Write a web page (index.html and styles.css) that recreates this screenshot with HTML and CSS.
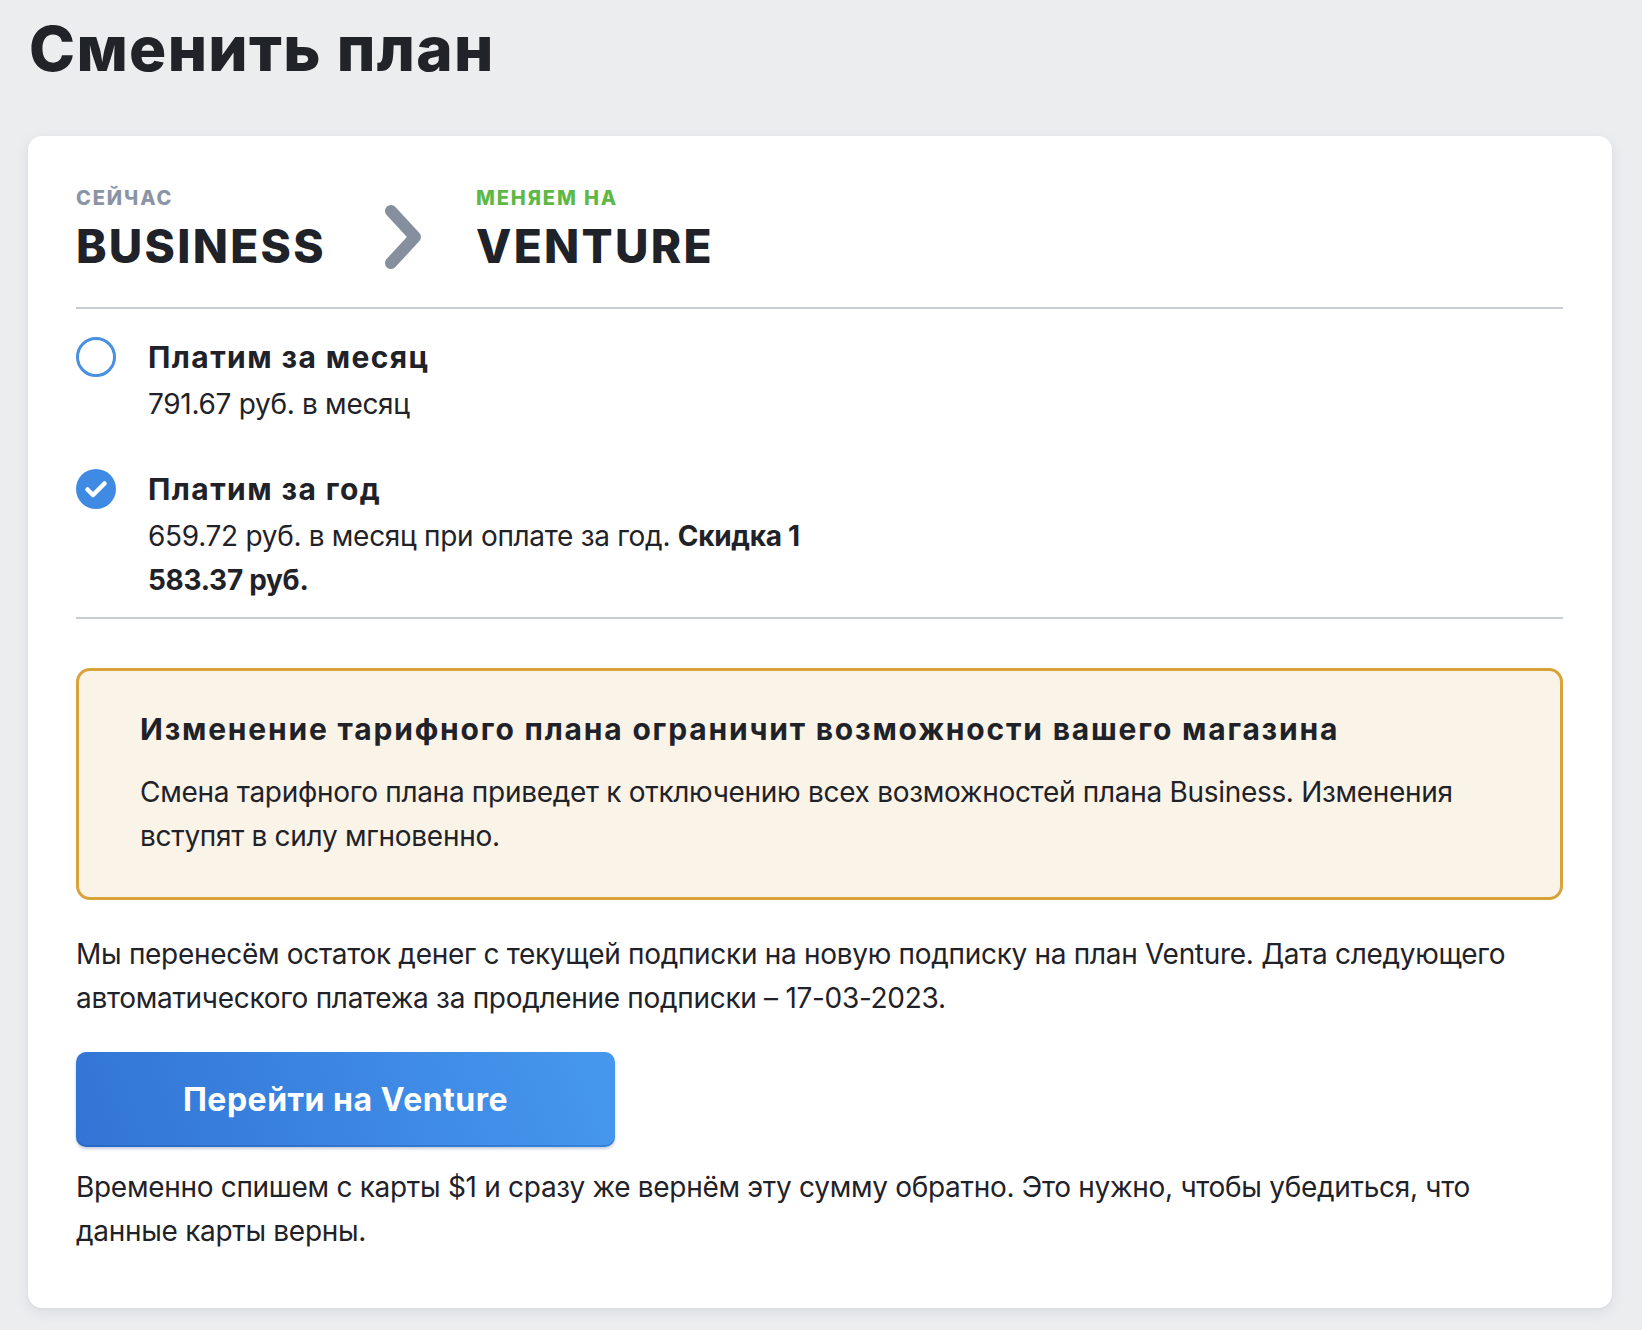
FILE: index.html
```html
<!DOCTYPE html>
<html lang="ru">
<head>
<meta charset="utf-8">
<title>Сменить план</title>
<link rel="stylesheet" href="styles.css">
</head>
<body>
<div class="page">
  <h1 class="page-title">Сменить план</h1>
  <div class="card">
    <div class="plans">
      <div class="plan">
        <div class="plan-label">Сейчас</div>
        <div class="plan-name">BUSINESS</div>
      </div>
      <svg class="chevron" width="36" height="64" viewBox="0 0 36 64"><polyline points="6,6 30,32 6,58" fill="none" stroke="#858f9d" stroke-width="12" stroke-linecap="round" stroke-linejoin="round"/></svg>
      <div class="plan">
        <div class="plan-label plan-label-new">Меняем на</div>
        <div class="plan-name">VENTURE</div>
      </div>
    </div>
    <div class="options">
      <div class="option">
        <span class="radio"></span>
        <div class="option-body">
          <div class="option-title">Платим за месяц</div>
          <div class="option-text">791.67 руб. в месяц</div>
        </div>
      </div>
      <div class="option">
        <span class="radio radio-checked"><svg width="40" height="40" viewBox="0 0 40 40"><polyline points="11.5,20.5 17,26 28.5,14.5" fill="none" stroke="#fff" stroke-width="4.5" stroke-linecap="round" stroke-linejoin="round"/></svg></span>
        <div class="option-body">
          <div class="option-title">Платим за год</div>
          <div class="option-text option-text-narrow">659.72 руб. в месяц при оплате за год. <b>Скидка 1 583.37 руб.</b></div>
        </div>
      </div>
    </div>
    <div class="warning">
      <div class="warning-title">Изменение тарифного плана ограничит возможности вашего магазина</div>
      <p class="warning-text">Смена тарифного плана приведет к отключению всех возможностей плана Business. Изменения вступят в силу мгновенно.</p>
    </div>
    <p class="note">Мы перенесём остаток денег с текущей подписки на новую подписку на план Venture. Дата следующего автоматического платежа за продление подписки – 17-03-2023.</p>
    <button class="btn">Перейти на Venture</button>
    <p class="hint">Временно спишем с карты $1 и сразу же вернём эту сумму обратно. Это нужно, чтобы убедиться, что данные карты верны.</p>
  </div>
</div>
</body>
</html>
```

FILE: styles.css
```css
* { box-sizing: border-box; }
html, body { margin: 0; padding: 0; }
body {
  background: #ecedef;
  font-family: Inter, "Noto Sans", sans-serif;
  color: #1f2228;
}
.page {
  padding: 12px 30px 23px 28px;
}
.page-title {
  margin: 0 0 50px 1px;
  font-size: 62px;
  line-height: 74px;
  font-weight: 800;
  letter-spacing: 1.3px;
  color: #202328;
}
.card {
  background: #fff;
  border-radius: 14px;
  box-shadow: 0 4px 14px rgba(30, 40, 60, 0.08), 0 1px 3px rgba(30, 40, 60, 0.05);
  padding: 50px 49px 55px 48px;
}
.plans {
  display: flex;
  align-items: flex-start;
  padding-bottom: 33px;
  border-bottom: 2px solid #c9cdd3;
}
.plan-label {
  font-size: 20px;
  line-height: 24px;
  font-weight: 800;
  letter-spacing: 1.9px;
  text-transform: uppercase;
  color: #8a94a5;
  margin-bottom: 8px;
}
.plan-label-new { color: #5cb946; }
.plan-name {
  font-size: 46px;
  line-height: 56px;
  font-weight: 800;
  letter-spacing: 2.3px;
  color: #1f2228;
}
.chevron {
  flex: none;
  margin: 19px 55px 0 59px;
}
.options {
  display: flex;
  flex-direction: column;
  gap: 43px;
  padding: 28px 0 15px;
  border-bottom: 2px solid #c9cdd3;
}
.option {
  display: flex;
  align-items: flex-start;
  gap: 32px;
}
.radio {
  flex: none;
  width: 40px;
  height: 40px;
  border-radius: 50%;
  border: 3.5px solid #4a90e2;
  background: #fff;
}
.radio-checked {
  border: none;
  background: #3f8ae3;
}
.radio-checked svg { display: block; }
.option-title {
  font-size: 30px;
  line-height: 40px;
  font-weight: 700;
  letter-spacing: 1.4px;
  color: #1f2228;
}
.option-text {
  margin-top: 5px;
  font-size: 28px;
  line-height: 44px;
  letter-spacing: -0.3px;
}
.option-text-narrow { max-width: 670px; }
.option-text b { font-weight: 700; }
.warning {
  margin-top: 49px;
  border: 3px solid #d9a33c;
  border-radius: 14px;
  background: #faf4e8;
  padding: 38px 61px 39px 61px;
}
.warning-title {
  font-size: 30px;
  line-height: 40px;
  font-weight: 700;
  letter-spacing: 1.8px;
}
.warning-text {
  margin: 21px 0 0;
  font-size: 28px;
  line-height: 44px;
  letter-spacing: -0.3px;
}
.note {
  margin: 32px 0 32px;
  font-size: 28px;
  line-height: 44px;
  letter-spacing: -0.3px;
}
.btn {
  display: block;
  width: 539px;
  height: 95px;
  border: none;
  border-radius: 10px;
  background: linear-gradient(70deg, #3274d5 0%, #4698ee 100%);
  box-shadow: 0 2px 3px rgba(20, 60, 130, 0.25), inset 0 -2px 0 rgba(20, 70, 160, 0.25);
  color: #fff;
  font-family: Inter, "Noto Sans", sans-serif;
  font-size: 32px;
  font-weight: 700;
  letter-spacing: 0.5px;
  padding: 0;
  cursor: pointer;
}
.hint {
  margin: 18px 0 0;
  font-size: 28px;
  line-height: 44px;
  letter-spacing: -0.3px;
}
```
